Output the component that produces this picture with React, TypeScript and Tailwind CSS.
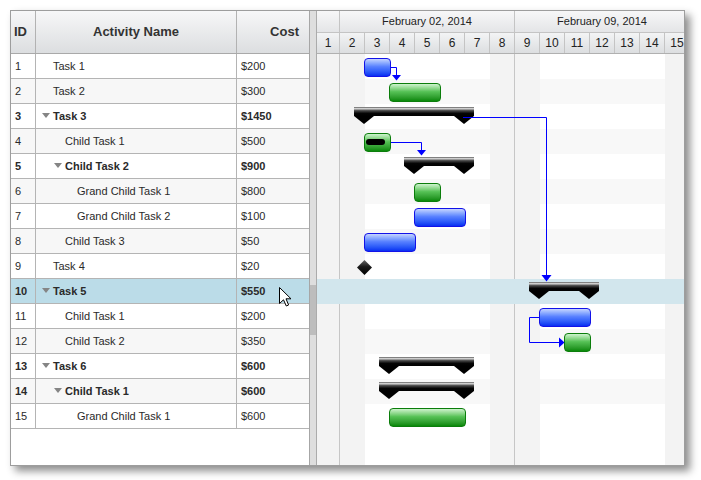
import React from 'react';
import clsx from 'clsx';

type Row = { id: number; name: string; level: number; parent?: boolean; cost: string };

const rows: Row[] = [
  { id: 1, name: 'Task 1', level: 0, cost: '$200' },
  { id: 2, name: 'Task 2', level: 0, cost: '$300' },
  { id: 3, name: 'Task 3', level: 0, parent: true, cost: '$1450' },
  { id: 4, name: 'Child Task 1', level: 1, cost: '$500' },
  { id: 5, name: 'Child Task 2', level: 1, parent: true, cost: '$900' },
  { id: 6, name: 'Grand Child Task 1', level: 2, cost: '$800' },
  { id: 7, name: 'Grand Child Task 2', level: 2, cost: '$100' },
  { id: 8, name: 'Child Task 3', level: 1, cost: '$50' },
  { id: 9, name: 'Task 4', level: 0, cost: '$20' },
  { id: 10, name: 'Task 5', level: 0, parent: true, cost: '$550' },
  { id: 11, name: 'Child Task 1', level: 1, cost: '$200' },
  { id: 12, name: 'Child Task 2', level: 1, cost: '$350' },
  { id: 13, name: 'Task 6', level: 0, parent: true, cost: '$600' },
  { id: 14, name: 'Child Task 1', level: 1, parent: true, cost: '$600' },
  { id: 15, name: 'Grand Child Task 1', level: 2, cost: '$600' },
];

type Bar =
  | { kind: 'task'; color: 'blue' | 'green'; left: number; width: number; progress?: boolean }
  | { kind: 'summary'; left: number; width: number }
  | { kind: 'milestone'; left: number };

const bars: Record<number, Bar> = {
  1: { kind: 'task', color: 'blue', left: 47, width: 27 },
  2: { kind: 'task', color: 'green', left: 72, width: 52 },
  3: { kind: 'summary', left: 37, width: 120 },
  4: { kind: 'task', color: 'green', left: 47, width: 27, progress: true },
  5: { kind: 'summary', left: 87, width: 70 },
  6: { kind: 'task', color: 'green', left: 97, width: 27 },
  7: { kind: 'task', color: 'blue', left: 97, width: 52 },
  8: { kind: 'task', color: 'blue', left: 47, width: 52 },
  9: { kind: 'milestone', left: 40 },
  10: { kind: 'summary', left: 212, width: 70 },
  11: { kind: 'task', color: 'blue', left: 222, width: 52 },
  12: { kind: 'task', color: 'green', left: 247, width: 27 },
  13: { kind: 'summary', left: 62, width: 95 },
  14: { kind: 'summary', left: 62, width: 95 },
  15: { kind: 'task', color: 'green', left: 72, width: 77 },
};

const days = Array.from({ length: 15 }, (_, i) => i + 1);
const weekend = new Set([1, 2, 8, 9, 15]);
const SELECTED = 10;

const indent: Record<number, string> = {
  0: 'pl-[6px]',
  1: 'pl-[18px]',
  2: 'pl-[30px]',
};

function SummaryBar({ id, left, width }: { id: number; left: number; width: number }) {
  const w = width;
  const pts = `0,0 ${w},0 ${w},9 ${w - 10},17 ${w - 20},9 20,9 10,17 0,9`;
  return (
    <svg className="absolute top-[3px]" width={w} height={17} style={{ left }}>
      <defs>
        <linearGradient id={`sg${id}`} gradientUnits="userSpaceOnUse" x1="0" y1="0" x2="0" y2="9">
          <stop offset="0" stopColor="#5a5a5a" />
          <stop offset="0.18" stopColor="#d8d8d8" />
          <stop offset="0.4" stopColor="#4a4a4a" />
          <stop offset="0.7" stopColor="#050505" />
          <stop offset="1" stopColor="#000" />
        </linearGradient>
      </defs>
      <polygon points={pts} fill={`url(#sg${id})`} />
    </svg>
  );
}

function Milestone({ left }: { left: number }) {
  return (
    <svg className="absolute top-[6px]" width={15} height={15} style={{ left }}>
      <defs>
        <linearGradient id="ms" x1="0" y1="0" x2="0" y2="1">
          <stop offset="0" stopColor="#666" />
          <stop offset="0.45" stopColor="#1a1a1a" />
          <stop offset="1" stopColor="#000" />
        </linearGradient>
      </defs>
      <polygon points="7.5,0 15,7.5 7.5,15 0,7.5" fill="url(#ms)" />
    </svg>
  );
}

function TaskBar({ bar }: { bar: Extract<Bar, { kind: 'task' }> }) {
  return (
    <div
      className={clsx(
        'absolute top-[4px] h-[19px] rounded-[4px] border',
        bar.color === 'blue'
          ? 'border-[#1212e8] bg-linear-to-b from-[#c6d4ff] via-[#5880ff] via-45% to-[#0a2cf2]'
          : 'border-[#0b7d0b] bg-linear-to-b from-[#cdf3cd] via-[#56c256] via-45% to-[#058805]'
      )}
      style={{ left: bar.left, width: bar.width }}
    >
      {bar.progress && (
        <div className="absolute left-[1px] top-[5px] h-[6px] w-[19px] rounded-full bg-black" />
      )}
    </div>
  );
}

function ChartRow({ idx, row }: { idx: number; row?: Row }) {
  const selected = row?.id === SELECTED;
  const even = row ? row.id % 2 === 0 : false;
  const bar = row ? bars[row.id] : undefined;
  return (
    <div className={clsx('relative flex shrink-0', row ? 'h-[25px]' : 'flex-1')}>
      {days.map((d) => (
        <div
          key={d}
          className={clsx(
            'h-full shrink-0',
            d === 1 ? 'w-[23px]' : 'w-[25px]',
            (d === 1 || d === 8) && 'border-r',
            selected
              ? 'bg-[#d2e6ed] border-transparent'
              : weekend.has(d)
              ? 'bg-[#f3f3f3] border-[#c6c6c6]'
              : even
              ? 'bg-[#f8f8f8] border-[#c6c6c6]'
              : 'bg-white border-[#c6c6c6]'
          )}
        />
      ))}
      {bar && bar.kind === 'task' && <TaskBar bar={bar} />}
      {bar && bar.kind === 'summary' && <SummaryBar id={idx} left={bar.left} width={bar.width} />}
      {bar && bar.kind === 'milestone' && <Milestone left={bar.left} />}
    </div>
  );
}

function Connectors() {
  return (
    <svg className="absolute left-0 top-0 pointer-events-none" width={367} height={411}>
      <g stroke="#0000ff" strokeWidth={1} fill="none">
        <path d="M74,13.5 H79.5 V21.5" />
        <path d="M146,63.5 H229.5 V221.5" />
        <path d="M74,88.5 H104.5 V96.5" />
        <path d="M222,263.5 H212.5 V288.5 H243" />
      </g>
      <g fill="#0000ff">
        <polygon points="75,21 84,21 79.5,26.5" />
        <polygon points="224.5,221 234.5,221 229.5,227.5" />
        <polygon points="100,96 109,96 104.5,101.5" />
        <polygon points="242,283.5 242,293.5 247.5,288.5" />
      </g>
    </svg>
  );
}

export default function App() {
  return (
    <div className="relative w-[701px] h-[480px] bg-white pl-[10px] pt-[10px] font-['Liberation_Sans',Arial,sans-serif]">
      <div className="flex w-[675px] h-[456px] border border-[#9d9d9d] bg-white overflow-hidden shadow-[5px_5px_8px_rgba(0,0,0,0.45)]">
        {/* Grid */}
        <div className="flex w-[299px] shrink-0 flex-col border-r border-[#a6a6a6]">
          <div className="flex h-[43px] shrink-0 border-b border-[#a9a9a9] bg-linear-to-b from-[#f7f7f8] to-[#dcdee0] text-[13px] font-bold text-[#333]">
            <div className="flex w-[25px] items-center border-r border-[#b2b2b2] pl-[3px]">ID</div>
            <div className="flex w-[201px] items-center justify-center border-r border-[#b2b2b2]">Activity Name</div>
            <div className="flex w-[72px] items-center justify-end pr-[10px]">Cost</div>
          </div>
          {rows.map((r) => {
            const selected = r.id === SELECTED;
            return (
              <div
                key={r.id}
                className={clsx(
                  'flex h-[25px] shrink-0 border-b border-[#b4b4b4] text-[11px] text-[#2a2a2a]',
                  selected ? 'bg-[#bbdce8]' : r.id % 2 === 0 ? 'bg-[#f7f7f7]' : 'bg-white',
                  r.parent && 'font-bold'
                )}
              >
                <div className="flex w-[25px] items-center border-r border-[#b4b4b4] pl-[4px]">{r.id}</div>
                <div className={clsx('flex w-[201px] items-center border-r border-[#b4b4b4]', indent[r.level])}>
                  <div className="flex w-[11px] shrink-0 items-center">
                    {r.parent && (
                      <div className="mt-[-2px] h-0 w-0 border-x-[4px] border-t-[5px] border-x-transparent border-t-[#858585]" />
                    )}
                  </div>
                  <span>{r.name}</span>
                </div>
                <div className="flex w-[72px] items-center pl-[4px]">{r.cost}</div>
              </div>
            );
          })}
          <div className="flex-1 bg-white" />
        </div>

        {/* Splitter */}
        <div className="flex w-[7px] shrink-0 flex-col border-r border-[#ababab] bg-[#dedede]">
          <div className="h-[274px] shrink-0" />
          <div className="h-[50px] shrink-0 bg-[#bdbdbd]" />
        </div>

        {/* Chart */}
        <div className="flex w-[367px] shrink-0 flex-col overflow-hidden">
          <div className="flex h-[22px] shrink-0 border-b border-[#c4c4c4] bg-linear-to-b from-[#f7f7f8] to-[#e4e5e7] text-[11px] text-[#222]">
            <div className="w-[23px] shrink-0 border-r border-[#c4c4c4]" />
            <div className="flex w-[175px] shrink-0 items-center justify-center border-r border-[#c4c4c4]">February 02, 2014</div>
            <div className="flex w-[175px] shrink-0 items-center justify-center border-r border-[#c4c4c4]">February 09, 2014</div>
          </div>
          <div className="flex h-[21px] shrink-0 border-b border-[#b0b0b0] bg-linear-to-b from-[#f3f4f5] to-[#dcdee0] text-[12px] text-[#222]">
            {days.map((d) => (
              <div
                key={d}
                className={clsx(
                  'flex shrink-0 items-center justify-center border-r border-[#c4c4c4]',
                  d === 1 ? 'w-[23px]' : 'w-[25px]'
                )}
              >
                {d}
              </div>
            ))}
          </div>
          <div className="relative flex flex-1 flex-col">
            {rows.map((r, i) => (
              <ChartRow key={r.id} idx={i} row={r} />
            ))}
            <ChartRow idx={99} />
            <Connectors />
          </div>
        </div>
      </div>

      {/* Mouse cursor */}
      <svg className="absolute left-[279px] top-[287px]" width={13} height={20}>
        <path
          d="M0.5,0.5 L0.5,16.5 L4.5,12.8 L7.3,19 L9.6,18 L7,11.8 L12,11.8 Z"
          fill="#fff"
          stroke="#000"
          strokeWidth={1}
          strokeLinejoin="miter"
        />
      </svg>
    </div>
  );
}
